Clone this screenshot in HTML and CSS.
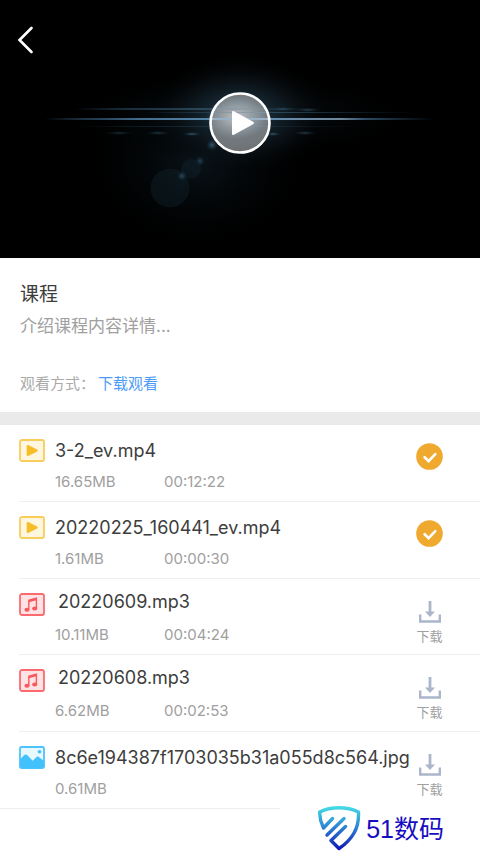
FILE: index.html
```html
<!DOCTYPE html>
<html lang="zh-CN">
<head>
<meta charset="utf-8">
<meta name="viewport" content="width=device-width, initial-scale=1">
<title>课程</title>
<link rel="stylesheet" href="styles.css">
</head>
<body>
<svg class="defs" width="0" height="0" aria-hidden="true">
  <symbol id="video" viewBox="0 0 26 23">
    <rect x="1" y="1" width="24" height="21" rx="2" fill="#fff6df" stroke="#f7cd5c" stroke-width="1.8"/>
    <path d="M8.700 7v9l9-4.500z" fill="#f6bd27" stroke="#f6bd27" stroke-width="2" stroke-linejoin="round"/>
  </symbol>
  <symbol id="music" viewBox="0 0 26 23">
    <rect x="1" y="1" width="24" height="21" rx="2" fill="#ffe3e4" stroke="#fa6a6e" stroke-width="1.8"/>
    <path d="M9.800 16.500V7.200l7.600-2v10" fill="none" stroke="#f9595e" stroke-width="1.400"/>
    <path d="M9.800 7l7.600-2v2.300l-7.600 2z" fill="#f9595e"/>
    <ellipse cx="8" cy="16.700" rx="2.600" ry="2" fill="#f9595e"/>
    <ellipse cx="15.700" cy="15.500" rx="2.600" ry="2" fill="#f9595e"/>
  </symbol>
  <symbol id="image" viewBox="0 0 26 23">
    <rect x="1" y="1" width="24" height="21" rx="1.500" fill="#e7f8ff" stroke="#4cc3fc" stroke-width="1.800"/>
    <path d="M1 13.500L5 9.300q1.700-1.700 3.400 0l5.300 5.500 3.300-3.400q1.700-1.700 3.400 0L25 15v7H1z" fill="#42c1fd"/>
    <circle cx="20.500" cy="5.700" r="1.800" fill="#42c1fd"/>
  </symbol>
  <symbol id="download" viewBox="0 0 22 22">
    <path d="M1.200 13.500v7h19.600v-7" fill="none" stroke="#abb6ca" stroke-width="2.400"/>
    <path d="M11 0v12" stroke="#abb6ca" stroke-width="2.800"/>
    <path d="M6 10.500h10l-5 5.500z" fill="#abb6ca"/>
  </symbol>
  <symbol id="done" viewBox="0 0 27 27">
    <circle cx="13.500" cy="13.500" r="13.300" fill="#f0a92f"/>
    <path d="M8.600 14.200l4 3.900 6.700-6.900" fill="none" stroke="#fff" stroke-width="2.600" stroke-linecap="round"/>
  </symbol>
</svg>
<header class="player">
  <svg class="flare" viewBox="0 0 480 258" preserveAspectRatio="xMidYMid slice" aria-hidden="true">
    <defs>
      <radialGradient id="halo"><stop offset="0" stop-color="#5d8bab" stop-opacity=".55"/><stop offset=".3" stop-color="#29475c" stop-opacity=".45"/><stop offset=".6" stop-color="#16242e" stop-opacity=".35"/><stop offset="1" stop-color="#000" stop-opacity="0"/></radialGradient>
      <radialGradient id="warm"><stop offset="0" stop-color="#ffdcc4" stop-opacity=".6"/><stop offset="1" stop-color="#8fb5cf" stop-opacity="0"/></radialGradient>
      <radialGradient id="haze"><stop offset="0" stop-color="#0c1a22" stop-opacity=".75"/><stop offset="1" stop-color="#000" stop-opacity="0"/></radialGradient>
      <radialGradient id="spot"><stop offset="0" stop-color="#3f6b83" stop-opacity=".8"/><stop offset="1" stop-color="#1b3442" stop-opacity="0"/></radialGradient>
      <linearGradient id="beam"><stop offset="0" stop-color="#32536d" stop-opacity="0"/><stop offset=".14" stop-color="#263f54"/><stop offset=".24" stop-color="#426b8d"/><stop offset=".5" stop-color="#5d8fb4"/><stop offset=".76" stop-color="#71859a"/><stop offset=".82" stop-color="#2c4c66"/><stop offset="1" stop-color="#21445e" stop-opacity="0"/></linearGradient>
      <linearGradient id="faint"><stop offset="0" stop-color="#2a4960" stop-opacity="0"/><stop offset=".2" stop-color="#2a4960" stop-opacity=".6"/><stop offset=".5" stop-color="#36596f" stop-opacity=".7"/><stop offset="1" stop-color="#2a4960" stop-opacity="0"/></linearGradient>
    </defs>
    <rect width="480" height="258" fill="#000"/>
    <ellipse cx="198" cy="162" rx="120" ry="95" fill="url(#haze)"/>
    <ellipse cx="240" cy="116" rx="190" ry="45" fill="url(#haze)"/>
    <ellipse cx="240" cy="114" rx="92" ry="62" fill="url(#halo)"/>
    <ellipse cx="236" cy="118" rx="30" ry="21" fill="url(#warm)"/>
    <rect x="75" y="108" width="250" height="2" fill="url(#faint)"/>
    <rect x="145" y="112" width="270" height="1" fill="url(#faint)"/>
    <rect x="45" y="118" width="390" height="2" fill="url(#beam)"/>
    <rect x="75" y="126" width="300" height="1" fill="url(#faint)" opacity=".5"/>
    <g fill="url(#spot)">
      <ellipse cx="119" cy="133" rx="14" ry="2" opacity=".5"/>
      <ellipse cx="158" cy="133" rx="12" ry="2" opacity=".6"/>
      <ellipse cx="192" cy="134" rx="9" ry="2"/>
      <ellipse cx="273" cy="134" rx="8" ry="2"/>
      <ellipse cx="305" cy="133" rx="11" ry="2" opacity=".7"/>
      <ellipse cx="283" cy="109" rx="12" ry="2" opacity=".7"/>
      <ellipse cx="308" cy="110" rx="12" ry="2" opacity=".7"/>
      <circle cx="212" cy="145" r="6"/>
      <circle cx="200" cy="161" r="5" opacity=".7"/>
      <circle cx="182" cy="176" r="5"/>
    </g>
    <circle cx="170" cy="188" r="19.500" fill="#18303d" opacity=".3"/>
    <circle cx="191" cy="169" r="10" fill="#18303d" opacity=".25"/>
  </svg>
  <a class="back" href="#" aria-label="返回"><svg width="18" height="28" viewBox="0 0 18 28"><path d="M15.500 2L3.500 14l12 12" fill="none" stroke="#fff" stroke-width="2.600" stroke-linecap="round" stroke-linejoin="miter"/></svg></a>
  <button class="play" type="button" aria-label="播放"><svg width="62" height="62" viewBox="0 0 62 62"><circle cx="31" cy="31" r="29.500" fill="#ddd" fill-opacity=".48" stroke="#fff" stroke-width="2.600"/><path d="M24 20v22l20-11z" fill="#fff" stroke="#fff" stroke-width="2" stroke-linejoin="round"/></svg></button>
</header>
<main>
  <section class="intro">
    <h1>课程</h1>
    <p class="detail">介绍课程内容详情...</p>
    <p class="mode">观看方式：<a href="#">下载观看</a></p>
  </section>
  <ul class="files">
    <li class="file">
      <svg class="kind"><use href="#video"/></svg>
      <div class="info"><h2>3-2_ev.mp4</h2><p class="meta"><span>16.65MB</span><span>00:12:22</span></p></div>
      <svg class="done" role="img" aria-label="已下载"><use href="#done"/></svg>
    </li>
    <li class="file">
      <svg class="kind"><use href="#video"/></svg>
      <div class="info"><h2>20220225_160441_ev.mp4</h2><p class="meta"><span>1.61MB</span><span>00:00:30</span></p></div>
      <svg class="done" role="img" aria-label="已下载"><use href="#done"/></svg>
    </li>
    <li class="file audio">
      <svg class="kind"><use href="#music"/></svg>
      <div class="info"><h2>20220609.mp3</h2><p class="meta"><span>10.11MB</span><span>00:04:24</span></p></div>
      <button class="download" type="button"><svg><use href="#download"/></svg>下载</button>
    </li>
    <li class="file audio">
      <svg class="kind"><use href="#music"/></svg>
      <div class="info"><h2>20220608.mp3</h2><p class="meta"><span>6.62MB</span><span>00:02:53</span></p></div>
      <button class="download" type="button"><svg><use href="#download"/></svg>下载</button>
    </li>
    <li class="file">
      <svg class="kind"><use href="#image"/></svg>
      <div class="info"><h2>8c6e194387f1703035b31a055d8c564.jpg</h2><p class="meta"><span>0.61MB</span></p></div>
      <button class="download" type="button"><svg><use href="#download"/></svg>下载</button>
    </li>
  </ul>
</main>
<footer class="brand">
  <svg width="44" height="45" viewBox="0 0 44 45" aria-hidden="true">
    <defs><linearGradient id="shield" gradientUnits="userSpaceOnUse" x1="0" y1="0" x2="0" y2="44"><stop offset="0" stop-color="#45dfe6"/><stop offset=".5" stop-color="#2c80d2"/><stop offset="1" stop-color="#1014b4"/></linearGradient></defs>
    <g fill="none" stroke="url(#shield)" stroke-width="3.400" stroke-linecap="round" stroke-linejoin="round">
      <path d="M14.500 12.500L5.500 22Q1.500 14 1.700 6Q10 1.700 21 1.700Q32 1.700 40.500 6Q41 19 36 27Q31 36 21 42.500L13 34.500L27.500 20.500"/>
      <path d="M9 29L26 12.500"/>
    </g>
  </svg>
  <span>51数码</span>
</footer>
</body>
</html>
```
FILE: styles.css
```css
* { box-sizing: border-box; }
body {
  margin: 0;
  background: #fff;
  color: #3d3d3d;
  font-family: Inter, "Noto Sans CJK SC", sans-serif;
}
h1, h2, p, ul { margin: 0; padding: 0; font-weight: 400; }
a { color: #4b9cf8; text-decoration: none; }
button { border: 0; padding: 0; background: none; font: inherit; cursor: pointer; }
svg { display: block; flex: none; }
.defs { position: absolute; }

.player {
  position: relative;
  display: grid;
  place-items: center;
  aspect-ratio: 480 / 258;
  background: #000;
}
.flare { position: absolute; inset: 0; width: 100%; height: 100%; }
.back { position: absolute; top: 26px; left: 16px; }
.play { position: relative; margin-bottom: 12px; }

.intro { padding: 21px 20px 14px; border-bottom: 13px solid #eaeaea; }
h1 { font-size: 19px; line-height: 32px; }
.detail { font-size: 17px; line-height: 30px; color: #a0a0a0; }
.mode { margin-top: 29px; font-size: 15px; line-height: 28px; color: #aaa; }
.mode a { margin-left: 3px; }

.files { list-style: none; }
.file {
  position: relative;
  display: flex;
  align-items: flex-start;
  height: 77px;
  padding: 14px 37px 0 19px;
}
.file::after {
  content: "";
  position: absolute;
  right: 0;
  bottom: 0;
  left: 19px;
  height: 1px;
  background: #eee;
}
.file:last-child::after { left: 0; }
.kind { width: 26px; height: 23px; }
.info { flex: 1; min-width: 0; margin-left: 10px; }
h2 { font-size: 18px; line-height: 24px; white-space: nowrap; }
.meta { display: flex; margin-top: 8px; font-size: 15px; line-height: 22px; color: #a0a0a0; }
.meta span:first-child { width: 109px; }
.file:nth-child(3) { height: 76px; }
.audio h2 { margin: -3px 0 0 3px; }
.audio .meta { margin-top: 10px; }
.done { width: 27px; height: 27px; margin-top: 4px; }
.download { width: 27px; margin-top: 8px; font-size: 13px; line-height: 20px; color: #a0a0a0; white-space: nowrap; }
.download svg { width: 22px; height: 22px; margin: 0 auto 3px; }

.brand {
  position: relative;
  display: flex;
  justify-content: flex-end;
  align-items: center;
  gap: 4px;
  width: 200px;
  margin: -3px 0 0 auto;
  padding-right: 36px;
  background: #fff;
  color: #160cc0;
  font-family: "Liberation Sans", "Noto Sans CJK SC", sans-serif;
  font-size: 25px;
  line-height: 40px;
}
```
